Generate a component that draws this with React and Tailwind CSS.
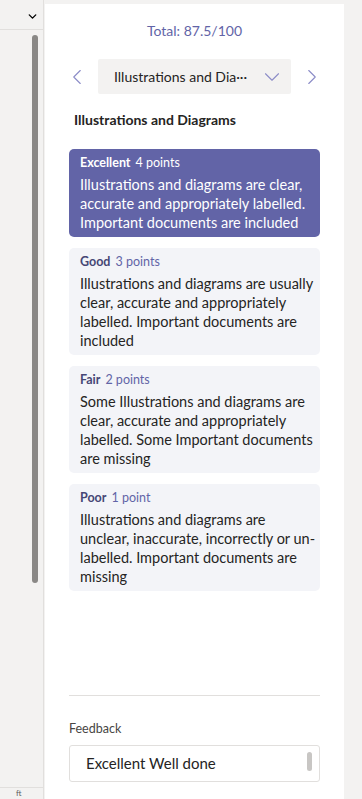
import { ChevronDown, ChevronLeft, ChevronRight } from "lucide-react";

const levels = [
    {
        name: "Excellent",
        points: "4 points",
        text: "Illustrations and diagrams are clear, accurate and appropriately labelled. Important documents are included",
        selected: true,
    },
    {
        name: "Good",
        points: "3 points",
        text: "Illustrations and diagrams are usually clear, accurate and appropriately labelled. Important documents are included",
    },
    {
        name: "Fair",
        points: "2 points",
        text: "Some Illustrations and diagrams are clear, accurate and appropriately labelled. Some Important documents are missing",
    },
    {
        name: "Poor",
        points: "1 point",
        text: "Illustrations and diagrams are unclear, inaccurate, incorrectly or un-labelled. Important documents are missing",
    },
];

function Level({ level }) {
    return (
        <div
            className={
                level.selected
                    ? "rounded-[5px] bg-[#6264a7] pl-[11px] pr-[3px] pt-[6px] pb-[5px] text-white"
                    : "rounded-[5px] bg-[#f3f4f8] pl-[11px] pr-[3px] pt-[6px] pb-[5px] text-[#252423]"
            }
        >
            <p className="flex gap-[5px] text-[12.5px] leading-[16px]">
                <span className={level.selected ? "font-bold" : "font-bold text-[#464775]"}>{level.name}</span>
                <span className={level.selected ? "" : "text-[#6264a7]"}>{level.points}</span>
            </p>
            <p className="mt-[4px] text-[14.5px] leading-[19px]">{level.text}</p>
        </div>
    );
}

export default function App() {
    return (
        <div className="flex h-[799px] w-[362px] overflow-hidden bg-[#f3f2f1] font-['Lato',sans-serif]">
            <div className="flex w-[44px] shrink-0 flex-col border-r border-[#e1dfdd]">
                <div className="flex h-[30px] items-center justify-end border-b border-[#e1dfdd] pr-[4px] pt-[3px]">
                    <ChevronDown size={13} strokeWidth={2.5} className="text-black" />
                </div>
                <div className="flex flex-1 justify-end pr-[5px] pt-[5px]">
                    <div className="h-[548px] w-[6px] rounded-full bg-[#8a8886]"></div>
                </div>
                <div className="h-[12px] border-t border-[#e1dfdd] pl-[16px] text-[8px] leading-[10px] text-[#605e5c]">ft</div>
            </div>

            <div className="ml-[1px] mt-[4px] flex w-[299px] shrink-0 flex-col bg-white">
                <p className="mt-[17px] text-center text-[14px] leading-[20px] text-[#6264a7]">Total: 87.5/100</p>

                <div className="mt-[18px] flex items-center">
                    <ChevronLeft size={26} strokeWidth={1} className="ml-[19px] text-[#8b8cc7]" />
                    <div className="ml-[8px] flex h-[35px] w-[193px] items-center justify-between rounded-[2px] bg-[#f3f2f1] pl-[16px] pr-[6px]">
                        <span className="text-[14px] text-[#252423]">Illustrations and Dia···</span>
                        <ChevronDown size={26} strokeWidth={1} className="text-[#8b8cc7]" />
                    </div>
                    <ChevronRight size={26} strokeWidth={1} className="ml-[8px] text-[#8b8cc7]" />
                </div>

                <p className="ml-[29px] mt-[16px] text-[14px] font-bold leading-[20px] text-[#252423]">
                    Illustrations and Diagrams
                </p>

                <div className="ml-[24px] mt-[19px] flex w-[251px] flex-col gap-[11px]">
                    {levels.map(l => (
                        <Level level={l} key={l.name} />
                    ))}
                </div>

                <div className="ml-[24px] mt-auto w-[251px]">
                    <div className="h-px bg-[#e1dfdd]"></div>
                    <p className="mt-[25px] text-[12.5px] leading-[16px] text-[#484644]">Feedback</p>
                    <div className="mb-[17px] mt-[8px] flex h-[37px] items-center justify-between rounded-[3px] border border-[#e1dfdd] pl-[16px] pr-[7px]">
                        <span className="text-[15px] text-[#252423]">Excellent Well done</span>
                        <div className="mt-[6px] h-[19px] w-[5px] self-start rounded-full bg-[#c8c6c4]"></div>
                    </div>
                </div>
            </div>
        </div>
    );
}
